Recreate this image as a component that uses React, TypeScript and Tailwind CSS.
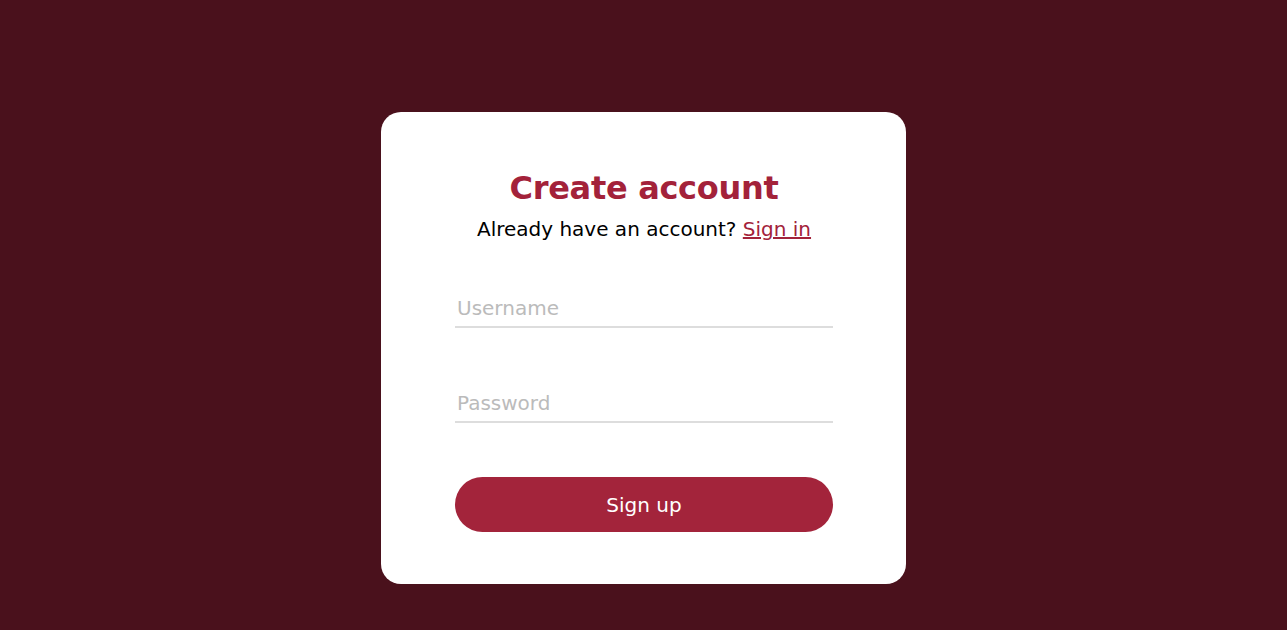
export default function App() {
  return (
    <div
      className="min-h-[630px] w-full bg-[#4a111c] flex justify-center pt-[112px]"
      style={{ fontFamily: '"DejaVu Sans", "Open Sans", sans-serif' }}
    >
      <div className="w-[525px] h-[472px] bg-white rounded-[20px] pl-[74px] pr-[73px] pt-[52px] pb-[52px] flex flex-col">
        <h1 className="text-center text-[32px] leading-[48px] h-[48px] font-bold text-[#a3223a] tracking-[-0.3px]">
          Create account
        </h1>
        <p className="text-center text-[20px] leading-[30px] h-[30px] text-black mt-[2px]">
          Already have an account?{" "}
          <a href="#" className="text-[#a3223a] underline">
            Sign in
          </a>
        </p>
        <input
          type="text"
          placeholder="Username"
          className="mt-[49px] w-full h-[35px] pb-[3px] px-[2px] text-[20px] leading-[30px] border-b-2 border-[#dddddd] outline-none placeholder:text-[#bbbbbb]"
        />
        <input
          type="password"
          placeholder="Password"
          className="mt-[60px] w-full h-[35px] pb-[3px] px-[2px] text-[20px] leading-[30px] border-b-2 border-[#dddddd] outline-none placeholder:text-[#bbbbbb]"
        />
        <button className="mt-[54px] w-full h-[55px] rounded-full bg-[#a3243b] text-white text-[20px]">
          Sign up
        </button>
      </div>
    </div>
  );
}
